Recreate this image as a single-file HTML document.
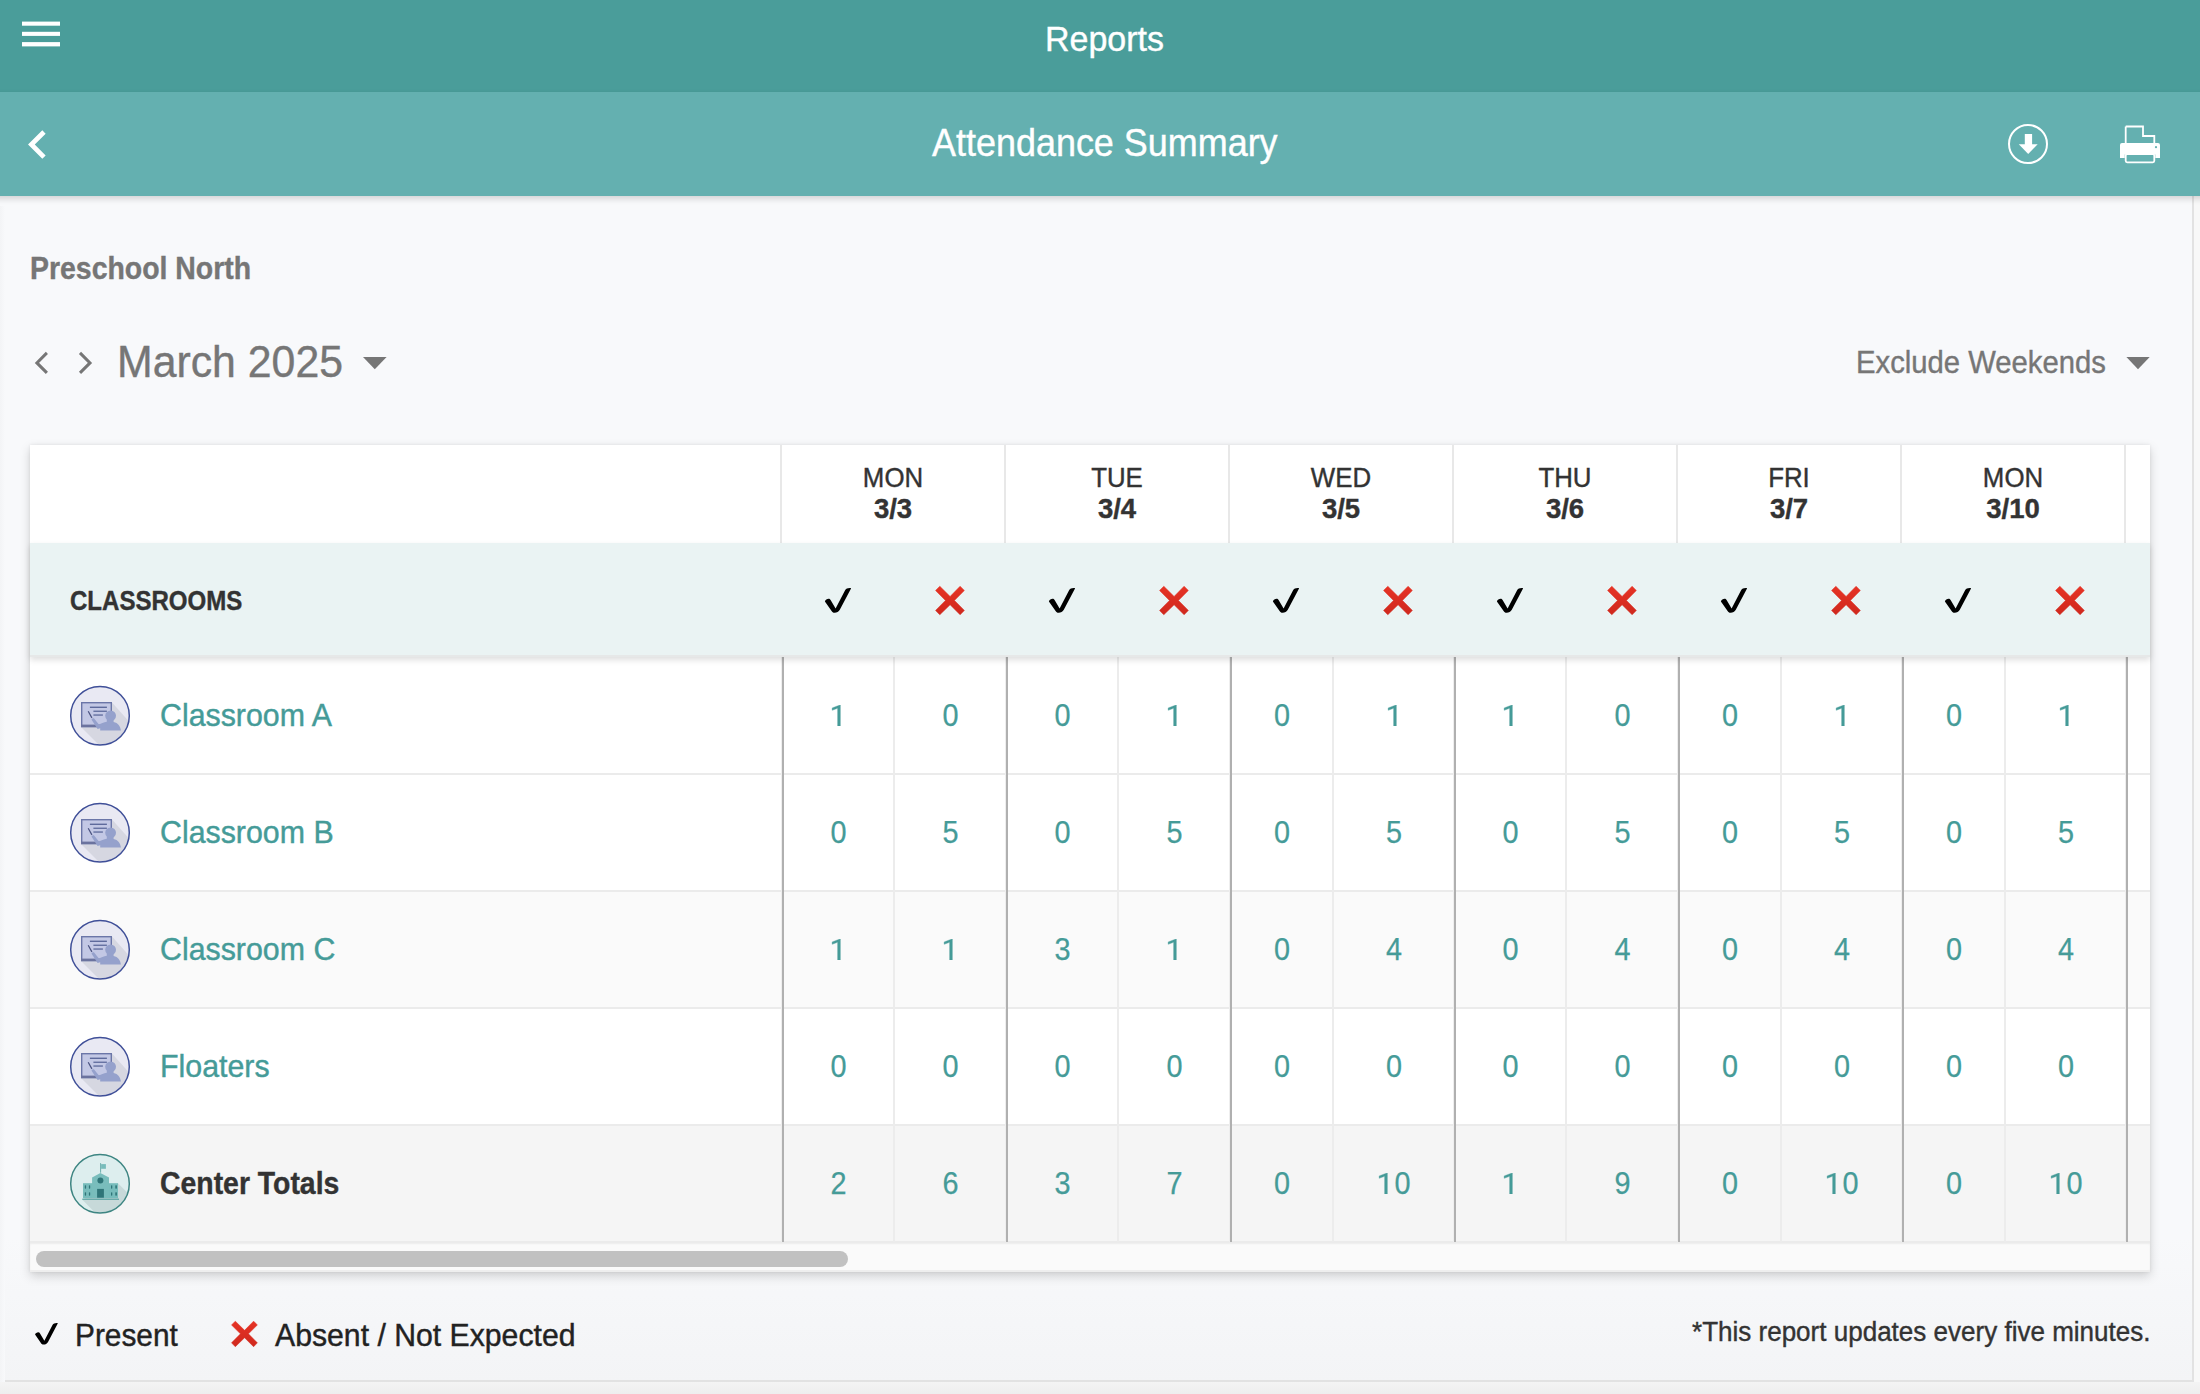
<!DOCTYPE html>
<html><head><meta charset="utf-8">
<style>
*{box-sizing:border-box;margin:0;padding:0}
html,body{width:2200px;height:1394px;overflow:hidden}
body{position:relative;background:#f0f0f0;font-family:"Liberation Sans",sans-serif}
.abs{position:absolute}
.t{position:absolute;white-space:nowrap;line-height:1;transform-origin:0 0;-webkit-text-stroke-width:.4px}
.n{position:absolute;white-space:nowrap;line-height:1;text-align:center;font-size:31px;color:#459b98;-webkit-text-stroke:.25px #459b98;transform:scaleX(.93)}
</style></head>
<body>
<svg width="0" height="0" style="position:absolute"><defs>
<linearGradient id="xg" x1="0" y1="0" x2="0" y2="1"><stop offset="0" stop-color="#e63325"/><stop offset="1" stop-color="#cf281d"/></linearGradient>
</defs></svg>

<div class="abs" style="left:0;top:196px;width:2194px;height:1186px;background:linear-gradient(#f8f9fb 0,#f8f9fb 1040px,#f3f4f6 1186px);border-right:2px solid #e2e2e2;border-bottom:2px solid #e2e2e2"></div>
<div class="abs" style="left:2194px;top:196px;width:6px;height:1186px;background:#f8f8f8"></div>
<div class="abs" style="left:0;top:1382px;width:2200px;height:12px;background:linear-gradient(#f4f4f4,#eeeeee)"></div>
<div class="abs" style="left:0;top:0;width:2200px;height:92px;background:#4a9d9a"></div>
<div class="abs" style="left:-20px;top:92px;width:2240px;height:104px;background:#64b0b0;box-shadow:0 3px 6px rgba(0,0,0,.15)"></div>
<div class="abs" style="left:0;top:206px;width:5px;height:1176px;background:linear-gradient(90deg,#f3f4f6,#f8f9fb)"></div>
<svg class="abs" style="left:0;top:0" width="80" height="80"><rect x="22" y="21.6" width="38" height="4.1" fill="#fff"/><rect x="22" y="31.8" width="38" height="4.1" fill="#fff"/><rect x="22" y="42.1" width="38" height="4.3" fill="#fff"/></svg>
<div class="t" style="left:1045.3px;top:21.6px;font-size:35.44px;color:#fff;transform:scaleX(.9585)">Reports</div>
<svg class="abs" style="left:8.9px;top:115.6px" width="57.1" height="57.1" viewBox="0 0 24 24"><path d="M15.41 7.41L14 6l-6 6 6 6 1.41-1.41L10.83 12z" fill="#fff"/></svg>
<div class="t" style="left:931.9px;top:123.5px;font-size:38.18px;color:#fff;transform:scaleX(.9415)">Attendance Summary</div>
<svg class="abs" style="left:2000px;top:116px" width="56" height="56" viewBox="0 0 56 56">
<circle cx="28" cy="28" r="19" fill="none" stroke="#fff" stroke-width="2"/>
<rect x="24.8" y="18" width="7.3" height="11.5" fill="#fff"/>
<path d="M18.8 28.2 L37.7 28.2 L28.2 37.9 Z" fill="#fff"/>
</svg>
<svg class="abs" style="left:2110px;top:115px" width="60" height="60" viewBox="0 0 60 60">
<path d="M15.7 11.5 L33 11.5 L33 21 L44.3 21 L44.3 29.5" fill="none" stroke="#fff" stroke-width="1.8"/>
<path d="M15.7 11.5 L15.7 29.5" stroke="#fff" stroke-width="1.8"/>
<path d="M12 28 L48 28 Q50 28 50 30 L50 43 L45.3 43 L45.3 39.5 L14.7 39.5 L14.7 43 L10 43 L10 30 Q10 28 12 28 Z" fill="#fff"/>
<circle cx="46" cy="32.2" r="1.1" fill="#64b0b0"/>
<rect x="15.7" y="39" width="28.6" height="8.3" rx="1.5" fill="none" stroke="#fff" stroke-width="1.8"/>
</svg>
<div class="t" style="left:29.6px;top:253.4px;font-size:31.56px;font-weight:bold;color:#767676;transform:scaleX(.9011)">Preschool North</div>
<svg class="abs" style="left:20px;top:340px" width="90" height="50" viewBox="0 0 90 50"><path d="M26.9 12.9 L16.9 22.9 L26.9 32.9" fill="none" stroke="#767676" stroke-width="3"/><path d="M60 12.9 L70 22.9 L60 32.9" fill="none" stroke="#767676" stroke-width="3"/></svg>
<div class="t" style="left:117.3px;top:340.3px;font-size:44.49px;color:#767676;transform:scaleX(.9622)">March 2025</div>
<svg class="abs" style="left:360px;top:350px" width="30" height="25"><path d="M3 7 L26.6 7 L14.8 19.2 Z" fill="#767676"/></svg>
<div class="t" style="left:1856px;top:346.8px;font-size:31.7px;color:#767676;transform:scaleX(.923)">Exclude Weekends</div>
<svg class="abs" style="left:2120px;top:350px" width="35" height="25"><path d="M6.4 7 L29.7 7 L18 19.2 Z" fill="#767676"/></svg>
<div class="abs" style="left:30px;top:445px;width:2120px;height:827px;background:#fff;box-shadow:0 4px 10px rgba(0,0,0,.17),0 0 3px rgba(0,0,0,.08)"></div>
<div class="abs" style="left:780px;top:445px;width:2px;height:98px;background:#e8e8e8"></div>
<div class="abs" style="left:1004px;top:445px;width:2px;height:98px;background:#e8e8e8"></div>
<div class="abs" style="left:1228px;top:445px;width:2px;height:98px;background:#e8e8e8"></div>
<div class="abs" style="left:1452px;top:445px;width:2px;height:98px;background:#e8e8e8"></div>
<div class="abs" style="left:1676px;top:445px;width:2px;height:98px;background:#e8e8e8"></div>
<div class="abs" style="left:1900px;top:445px;width:2px;height:98px;background:#e8e8e8"></div>
<div class="abs" style="left:2124px;top:445px;width:2px;height:98px;background:#e8e8e8"></div>
<div class="t" style="left:781px;width:224px;text-align:center;top:464px;font-size:27.2px;color:#333;transform:scaleX(.95);transform-origin:50% 0">MON</div>
<div class="t" style="left:781px;width:224px;text-align:center;top:494.8px;font-size:27.5px;font-weight:bold;color:#333">3/3</div>
<div class="t" style="left:1005px;width:224px;text-align:center;top:464px;font-size:27.2px;color:#333;transform:scaleX(.95);transform-origin:50% 0">TUE</div>
<div class="t" style="left:1005px;width:224px;text-align:center;top:494.8px;font-size:27.5px;font-weight:bold;color:#333">3/4</div>
<div class="t" style="left:1229px;width:224px;text-align:center;top:464px;font-size:27.2px;color:#333;transform:scaleX(.95);transform-origin:50% 0">WED</div>
<div class="t" style="left:1229px;width:224px;text-align:center;top:494.8px;font-size:27.5px;font-weight:bold;color:#333">3/5</div>
<div class="t" style="left:1453px;width:224px;text-align:center;top:464px;font-size:27.2px;color:#333;transform:scaleX(.95);transform-origin:50% 0">THU</div>
<div class="t" style="left:1453px;width:224px;text-align:center;top:494.8px;font-size:27.5px;font-weight:bold;color:#333">3/6</div>
<div class="t" style="left:1677px;width:224px;text-align:center;top:464px;font-size:27.2px;color:#333;transform:scaleX(.95);transform-origin:50% 0">FRI</div>
<div class="t" style="left:1677px;width:224px;text-align:center;top:494.8px;font-size:27.5px;font-weight:bold;color:#333">3/7</div>
<div class="t" style="left:1901px;width:224px;text-align:center;top:464px;font-size:27.2px;color:#333;transform:scaleX(.95);transform-origin:50% 0">MON</div>
<div class="t" style="left:1901px;width:224px;text-align:center;top:494.8px;font-size:27.5px;font-weight:bold;color:#333">3/10</div>
<div class="abs" style="left:30px;top:543px;width:2120px;height:114px;background:#eaf3f3;border-bottom:2px solid #e6e8e8;box-shadow:0 3px 6px rgba(0,0,0,.13);z-index:2"></div>
<div class="t" style="left:69.8px;top:587.6px;font-size:27.04px;font-weight:bold;color:#333;transform:scaleX(.8893);z-index:3">CLASSROOMS</div>
<svg class="abs" style="left:820px;top:580px;z-index:3" width="40" height="40" viewBox="0 0 40 40"><path d="M4.9 21.4 C5.4 19.9 7 18.9 8.6 18.8 C9.5 18.8 10.1 19.3 10.6 20.1 L15.6 28.4 L25.1 10.2 C26 8.6 28.2 7.7 31 8.1 C31 8.6 30.8 9 30.5 9.5 L19.8 29.8 C18.7 31.8 16.6 32.9 14.4 32.8 C13.1 32.7 12.3 32.1 11.6 31 Z" fill="#000"/></svg>
<svg class="abs" style="left:930px;top:580px;z-index:3" width="40" height="40" viewBox="0 0 40 40"><path d="M5.6 10.5 L9.8 6.3 L20.1 16.5 L30.1 6.3 L34.3 10.5 L24.4 20.4 L34.3 30.4 L30.1 34.7 L20.1 24.7 L9.8 34.7 L5.6 30.4 L15.5 20.4 Z" fill="url(#xg)" stroke="url(#xg)" stroke-width="0.6" stroke-linejoin="round"/></svg>
<svg class="abs" style="left:1044px;top:580px;z-index:3" width="40" height="40" viewBox="0 0 40 40"><path d="M4.9 21.4 C5.4 19.9 7 18.9 8.6 18.8 C9.5 18.8 10.1 19.3 10.6 20.1 L15.6 28.4 L25.1 10.2 C26 8.6 28.2 7.7 31 8.1 C31 8.6 30.8 9 30.5 9.5 L19.8 29.8 C18.7 31.8 16.6 32.9 14.4 32.8 C13.1 32.7 12.3 32.1 11.6 31 Z" fill="#000"/></svg>
<svg class="abs" style="left:1154px;top:580px;z-index:3" width="40" height="40" viewBox="0 0 40 40"><path d="M5.6 10.5 L9.8 6.3 L20.1 16.5 L30.1 6.3 L34.3 10.5 L24.4 20.4 L34.3 30.4 L30.1 34.7 L20.1 24.7 L9.8 34.7 L5.6 30.4 L15.5 20.4 Z" fill="url(#xg)" stroke="url(#xg)" stroke-width="0.6" stroke-linejoin="round"/></svg>
<svg class="abs" style="left:1268px;top:580px;z-index:3" width="40" height="40" viewBox="0 0 40 40"><path d="M4.9 21.4 C5.4 19.9 7 18.9 8.6 18.8 C9.5 18.8 10.1 19.3 10.6 20.1 L15.6 28.4 L25.1 10.2 C26 8.6 28.2 7.7 31 8.1 C31 8.6 30.8 9 30.5 9.5 L19.8 29.8 C18.7 31.8 16.6 32.9 14.4 32.8 C13.1 32.7 12.3 32.1 11.6 31 Z" fill="#000"/></svg>
<svg class="abs" style="left:1378px;top:580px;z-index:3" width="40" height="40" viewBox="0 0 40 40"><path d="M5.6 10.5 L9.8 6.3 L20.1 16.5 L30.1 6.3 L34.3 10.5 L24.4 20.4 L34.3 30.4 L30.1 34.7 L20.1 24.7 L9.8 34.7 L5.6 30.4 L15.5 20.4 Z" fill="url(#xg)" stroke="url(#xg)" stroke-width="0.6" stroke-linejoin="round"/></svg>
<svg class="abs" style="left:1492px;top:580px;z-index:3" width="40" height="40" viewBox="0 0 40 40"><path d="M4.9 21.4 C5.4 19.9 7 18.9 8.6 18.8 C9.5 18.8 10.1 19.3 10.6 20.1 L15.6 28.4 L25.1 10.2 C26 8.6 28.2 7.7 31 8.1 C31 8.6 30.8 9 30.5 9.5 L19.8 29.8 C18.7 31.8 16.6 32.9 14.4 32.8 C13.1 32.7 12.3 32.1 11.6 31 Z" fill="#000"/></svg>
<svg class="abs" style="left:1602px;top:580px;z-index:3" width="40" height="40" viewBox="0 0 40 40"><path d="M5.6 10.5 L9.8 6.3 L20.1 16.5 L30.1 6.3 L34.3 10.5 L24.4 20.4 L34.3 30.4 L30.1 34.7 L20.1 24.7 L9.8 34.7 L5.6 30.4 L15.5 20.4 Z" fill="url(#xg)" stroke="url(#xg)" stroke-width="0.6" stroke-linejoin="round"/></svg>
<svg class="abs" style="left:1716px;top:580px;z-index:3" width="40" height="40" viewBox="0 0 40 40"><path d="M4.9 21.4 C5.4 19.9 7 18.9 8.6 18.8 C9.5 18.8 10.1 19.3 10.6 20.1 L15.6 28.4 L25.1 10.2 C26 8.6 28.2 7.7 31 8.1 C31 8.6 30.8 9 30.5 9.5 L19.8 29.8 C18.7 31.8 16.6 32.9 14.4 32.8 C13.1 32.7 12.3 32.1 11.6 31 Z" fill="#000"/></svg>
<svg class="abs" style="left:1826px;top:580px;z-index:3" width="40" height="40" viewBox="0 0 40 40"><path d="M5.6 10.5 L9.8 6.3 L20.1 16.5 L30.1 6.3 L34.3 10.5 L24.4 20.4 L34.3 30.4 L30.1 34.7 L20.1 24.7 L9.8 34.7 L5.6 30.4 L15.5 20.4 Z" fill="url(#xg)" stroke="url(#xg)" stroke-width="0.6" stroke-linejoin="round"/></svg>
<svg class="abs" style="left:1940px;top:580px;z-index:3" width="40" height="40" viewBox="0 0 40 40"><path d="M4.9 21.4 C5.4 19.9 7 18.9 8.6 18.8 C9.5 18.8 10.1 19.3 10.6 20.1 L15.6 28.4 L25.1 10.2 C26 8.6 28.2 7.7 31 8.1 C31 8.6 30.8 9 30.5 9.5 L19.8 29.8 C18.7 31.8 16.6 32.9 14.4 32.8 C13.1 32.7 12.3 32.1 11.6 31 Z" fill="#000"/></svg>
<svg class="abs" style="left:2050px;top:580px;z-index:3" width="40" height="40" viewBox="0 0 40 40"><path d="M5.6 10.5 L9.8 6.3 L20.1 16.5 L30.1 6.3 L34.3 10.5 L24.4 20.4 L34.3 30.4 L30.1 34.7 L20.1 24.7 L9.8 34.7 L5.6 30.4 L15.5 20.4 Z" fill="url(#xg)" stroke="url(#xg)" stroke-width="0.6" stroke-linejoin="round"/></svg>
<div class="abs" style="left:30px;top:658px;width:2120px;height:117px;background:#ffffff;border-bottom:2px solid #ebebeb"></div>
<svg class="abs" style="left:65.0px;top:681.0px" width="70" height="70" viewBox="0 0 70 70">
<defs><clipPath id="cc715"><circle cx="35" cy="34.7" r="29"/></clipPath></defs>
<circle cx="35" cy="34.7" r="29.1" fill="#e9e9f3"/>
<g clip-path="url(#cc715)"><path d="M47 21.5 L92 71.5 L66 96 L16 46 Z" fill="#d6d7e1"/></g>
<rect x="16.7" y="21.7" width="29.6" height="23.8" fill="#c3c8e5" stroke="#6b76a8" stroke-width="1.4"/>
<rect x="16" y="43.6" width="31" height="2.6" fill="#6b739f"/>
<rect x="24.9" y="25.6" width="17" height="1.4" fill="#5e6a9c"/>
<rect x="28.4" y="29.6" width="13.5" height="1.3" fill="#5e6a9c"/>
<rect x="28.4" y="33.4" width="9.5" height="1.3" fill="#5e6a9c"/>
<path d="M23.2 30.2 L26.9 36.9" stroke="#4a5280" stroke-width="1.2"/>
<circle cx="45.6" cy="34.8" r="5.4" fill="#95a1cc"/>
<path d="M26.6 38.7 C26.8 37.6 28.2 36.9 29.1 37.6 L33.9 43.6 C36 42.2 38.8 41.3 41.8 40.7 L41.8 38.5 L48.6 38.5 L48.6 40.9 C53 41.6 55.5 45.2 55.9 49.4 L35.2 49.4 L35.2 47.3 L32.6 47.9 Z" fill="#95a1cc"/>
<circle cx="35" cy="34.7" r="29.3" fill="none" stroke="#3f4f98" stroke-width="1.5"/>
</svg>
<div class="t" style="left:159.9px;top:701.3px;font-size:30.88px;color:#459b98;transform:scaleX(.9826)">Classroom A</div>
<svg class="abs" style="left:830.10px;top:704.5px" width="16.8" height="21.4" viewBox="0 0 16.8 21.4"><path d="M10.35 0 L10.35 21.38 L7.63 21.38 L7.63 3.36 L2.18 5.36 L2.18 2.91 L9.93 0 Z" fill="#459b98" stroke="#459b98" stroke-width=".35"/></svg>
<div class="n" style="left:894px;width:113px;top:699.7px">0</div>
<div class="n" style="left:1007px;width:111px;top:699.7px">0</div>
<svg class="abs" style="left:1166.10px;top:704.5px" width="16.8" height="21.4" viewBox="0 0 16.8 21.4"><path d="M10.35 0 L10.35 21.38 L7.63 21.38 L7.63 3.36 L2.18 5.36 L2.18 2.91 L9.93 0 Z" fill="#459b98" stroke="#459b98" stroke-width=".35"/></svg>
<div class="n" style="left:1231px;width:102px;top:699.7px">0</div>
<svg class="abs" style="left:1385.60px;top:704.5px" width="16.8" height="21.4" viewBox="0 0 16.8 21.4"><path d="M10.35 0 L10.35 21.38 L7.63 21.38 L7.63 3.36 L2.18 5.36 L2.18 2.91 L9.93 0 Z" fill="#459b98" stroke="#459b98" stroke-width=".35"/></svg>
<svg class="abs" style="left:1502.10px;top:704.5px" width="16.8" height="21.4" viewBox="0 0 16.8 21.4"><path d="M10.35 0 L10.35 21.38 L7.63 21.38 L7.63 3.36 L2.18 5.36 L2.18 2.91 L9.93 0 Z" fill="#459b98" stroke="#459b98" stroke-width=".35"/></svg>
<div class="n" style="left:1566px;width:113px;top:699.7px">0</div>
<div class="n" style="left:1679px;width:102px;top:699.7px">0</div>
<svg class="abs" style="left:1833.60px;top:704.5px" width="16.8" height="21.4" viewBox="0 0 16.8 21.4"><path d="M10.35 0 L10.35 21.38 L7.63 21.38 L7.63 3.36 L2.18 5.36 L2.18 2.91 L9.93 0 Z" fill="#459b98" stroke="#459b98" stroke-width=".35"/></svg>
<div class="n" style="left:1903px;width:102px;top:699.7px">0</div>
<svg class="abs" style="left:2057.60px;top:704.5px" width="16.8" height="21.4" viewBox="0 0 16.8 21.4"><path d="M10.35 0 L10.35 21.38 L7.63 21.38 L7.63 3.36 L2.18 5.36 L2.18 2.91 L9.93 0 Z" fill="#459b98" stroke="#459b98" stroke-width=".35"/></svg>
<div class="abs" style="left:30px;top:775px;width:2120px;height:117px;background:#ffffff;border-bottom:2px solid #ebebeb"></div>
<svg class="abs" style="left:65.0px;top:798.0px" width="70" height="70" viewBox="0 0 70 70">
<defs><clipPath id="cc832"><circle cx="35" cy="34.7" r="29"/></clipPath></defs>
<circle cx="35" cy="34.7" r="29.1" fill="#e9e9f3"/>
<g clip-path="url(#cc832)"><path d="M47 21.5 L92 71.5 L66 96 L16 46 Z" fill="#d6d7e1"/></g>
<rect x="16.7" y="21.7" width="29.6" height="23.8" fill="#c3c8e5" stroke="#6b76a8" stroke-width="1.4"/>
<rect x="16" y="43.6" width="31" height="2.6" fill="#6b739f"/>
<rect x="24.9" y="25.6" width="17" height="1.4" fill="#5e6a9c"/>
<rect x="28.4" y="29.6" width="13.5" height="1.3" fill="#5e6a9c"/>
<rect x="28.4" y="33.4" width="9.5" height="1.3" fill="#5e6a9c"/>
<path d="M23.2 30.2 L26.9 36.9" stroke="#4a5280" stroke-width="1.2"/>
<circle cx="45.6" cy="34.8" r="5.4" fill="#95a1cc"/>
<path d="M26.6 38.7 C26.8 37.6 28.2 36.9 29.1 37.6 L33.9 43.6 C36 42.2 38.8 41.3 41.8 40.7 L41.8 38.5 L48.6 38.5 L48.6 40.9 C53 41.6 55.5 45.2 55.9 49.4 L35.2 49.4 L35.2 47.3 L32.6 47.9 Z" fill="#95a1cc"/>
<circle cx="35" cy="34.7" r="29.3" fill="none" stroke="#3f4f98" stroke-width="1.5"/>
</svg>
<div class="t" style="left:159.9px;top:818.3px;font-size:30.88px;color:#459b98;transform:scaleX(.9826)">Classroom B</div>
<div class="n" style="left:783px;width:111px;top:816.7px">0</div>
<div class="n" style="left:894px;width:113px;top:816.7px">5</div>
<div class="n" style="left:1007px;width:111px;top:816.7px">0</div>
<div class="n" style="left:1118px;width:113px;top:816.7px">5</div>
<div class="n" style="left:1231px;width:102px;top:816.7px">0</div>
<div class="n" style="left:1333px;width:122px;top:816.7px">5</div>
<div class="n" style="left:1455px;width:111px;top:816.7px">0</div>
<div class="n" style="left:1566px;width:113px;top:816.7px">5</div>
<div class="n" style="left:1679px;width:102px;top:816.7px">0</div>
<div class="n" style="left:1781px;width:122px;top:816.7px">5</div>
<div class="n" style="left:1903px;width:102px;top:816.7px">0</div>
<div class="n" style="left:2005px;width:122px;top:816.7px">5</div>
<div class="abs" style="left:30px;top:892px;width:2120px;height:117px;background:#fafafa;border-bottom:2px solid #ebebeb"></div>
<svg class="abs" style="left:65.0px;top:915.0px" width="70" height="70" viewBox="0 0 70 70">
<defs><clipPath id="cc949"><circle cx="35" cy="34.7" r="29"/></clipPath></defs>
<circle cx="35" cy="34.7" r="29.1" fill="#e9e9f3"/>
<g clip-path="url(#cc949)"><path d="M47 21.5 L92 71.5 L66 96 L16 46 Z" fill="#d6d7e1"/></g>
<rect x="16.7" y="21.7" width="29.6" height="23.8" fill="#c3c8e5" stroke="#6b76a8" stroke-width="1.4"/>
<rect x="16" y="43.6" width="31" height="2.6" fill="#6b739f"/>
<rect x="24.9" y="25.6" width="17" height="1.4" fill="#5e6a9c"/>
<rect x="28.4" y="29.6" width="13.5" height="1.3" fill="#5e6a9c"/>
<rect x="28.4" y="33.4" width="9.5" height="1.3" fill="#5e6a9c"/>
<path d="M23.2 30.2 L26.9 36.9" stroke="#4a5280" stroke-width="1.2"/>
<circle cx="45.6" cy="34.8" r="5.4" fill="#95a1cc"/>
<path d="M26.6 38.7 C26.8 37.6 28.2 36.9 29.1 37.6 L33.9 43.6 C36 42.2 38.8 41.3 41.8 40.7 L41.8 38.5 L48.6 38.5 L48.6 40.9 C53 41.6 55.5 45.2 55.9 49.4 L35.2 49.4 L35.2 47.3 L32.6 47.9 Z" fill="#95a1cc"/>
<circle cx="35" cy="34.7" r="29.3" fill="none" stroke="#3f4f98" stroke-width="1.5"/>
</svg>
<div class="t" style="left:159.9px;top:935.3px;font-size:30.88px;color:#459b98;transform:scaleX(.9826)">Classroom C</div>
<svg class="abs" style="left:830.10px;top:938.5px" width="16.8" height="21.4" viewBox="0 0 16.8 21.4"><path d="M10.35 0 L10.35 21.38 L7.63 21.38 L7.63 3.36 L2.18 5.36 L2.18 2.91 L9.93 0 Z" fill="#459b98" stroke="#459b98" stroke-width=".35"/></svg>
<svg class="abs" style="left:942.10px;top:938.5px" width="16.8" height="21.4" viewBox="0 0 16.8 21.4"><path d="M10.35 0 L10.35 21.38 L7.63 21.38 L7.63 3.36 L2.18 5.36 L2.18 2.91 L9.93 0 Z" fill="#459b98" stroke="#459b98" stroke-width=".35"/></svg>
<div class="n" style="left:1007px;width:111px;top:933.7px">3</div>
<svg class="abs" style="left:1166.10px;top:938.5px" width="16.8" height="21.4" viewBox="0 0 16.8 21.4"><path d="M10.35 0 L10.35 21.38 L7.63 21.38 L7.63 3.36 L2.18 5.36 L2.18 2.91 L9.93 0 Z" fill="#459b98" stroke="#459b98" stroke-width=".35"/></svg>
<div class="n" style="left:1231px;width:102px;top:933.7px">0</div>
<div class="n" style="left:1333px;width:122px;top:933.7px">4</div>
<div class="n" style="left:1455px;width:111px;top:933.7px">0</div>
<div class="n" style="left:1566px;width:113px;top:933.7px">4</div>
<div class="n" style="left:1679px;width:102px;top:933.7px">0</div>
<div class="n" style="left:1781px;width:122px;top:933.7px">4</div>
<div class="n" style="left:1903px;width:102px;top:933.7px">0</div>
<div class="n" style="left:2005px;width:122px;top:933.7px">4</div>
<div class="abs" style="left:30px;top:1009px;width:2120px;height:117px;background:#ffffff;border-bottom:2px solid #ebebeb"></div>
<svg class="abs" style="left:65.0px;top:1032.0px" width="70" height="70" viewBox="0 0 70 70">
<defs><clipPath id="cc1066"><circle cx="35" cy="34.7" r="29"/></clipPath></defs>
<circle cx="35" cy="34.7" r="29.1" fill="#e9e9f3"/>
<g clip-path="url(#cc1066)"><path d="M47 21.5 L92 71.5 L66 96 L16 46 Z" fill="#d6d7e1"/></g>
<rect x="16.7" y="21.7" width="29.6" height="23.8" fill="#c3c8e5" stroke="#6b76a8" stroke-width="1.4"/>
<rect x="16" y="43.6" width="31" height="2.6" fill="#6b739f"/>
<rect x="24.9" y="25.6" width="17" height="1.4" fill="#5e6a9c"/>
<rect x="28.4" y="29.6" width="13.5" height="1.3" fill="#5e6a9c"/>
<rect x="28.4" y="33.4" width="9.5" height="1.3" fill="#5e6a9c"/>
<path d="M23.2 30.2 L26.9 36.9" stroke="#4a5280" stroke-width="1.2"/>
<circle cx="45.6" cy="34.8" r="5.4" fill="#95a1cc"/>
<path d="M26.6 38.7 C26.8 37.6 28.2 36.9 29.1 37.6 L33.9 43.6 C36 42.2 38.8 41.3 41.8 40.7 L41.8 38.5 L48.6 38.5 L48.6 40.9 C53 41.6 55.5 45.2 55.9 49.4 L35.2 49.4 L35.2 47.3 L32.6 47.9 Z" fill="#95a1cc"/>
<circle cx="35" cy="34.7" r="29.3" fill="none" stroke="#3f4f98" stroke-width="1.5"/>
</svg>
<div class="t" style="left:159.9px;top:1052.3px;font-size:30.88px;color:#459b98;transform:scaleX(.9826)">Floaters</div>
<div class="n" style="left:783px;width:111px;top:1050.7px">0</div>
<div class="n" style="left:894px;width:113px;top:1050.7px">0</div>
<div class="n" style="left:1007px;width:111px;top:1050.7px">0</div>
<div class="n" style="left:1118px;width:113px;top:1050.7px">0</div>
<div class="n" style="left:1231px;width:102px;top:1050.7px">0</div>
<div class="n" style="left:1333px;width:122px;top:1050.7px">0</div>
<div class="n" style="left:1455px;width:111px;top:1050.7px">0</div>
<div class="n" style="left:1566px;width:113px;top:1050.7px">0</div>
<div class="n" style="left:1679px;width:102px;top:1050.7px">0</div>
<div class="n" style="left:1781px;width:122px;top:1050.7px">0</div>
<div class="n" style="left:1903px;width:102px;top:1050.7px">0</div>
<div class="n" style="left:2005px;width:122px;top:1050.7px">0</div>
<div class="abs" style="left:30px;top:1126px;width:2120px;height:117px;background:#f5f5f5;border-bottom:2px solid #ebebeb"></div>
<svg class="abs" style="left:65.0px;top:1149.0px" width="70" height="70" viewBox="0 0 70 70">
<defs><clipPath id="sc"><circle cx="35" cy="34.7" r="29"/></clipPath></defs>
<circle cx="35" cy="34.7" r="29.1" fill="#ddeeee"/>
<g clip-path="url(#sc)"><path d="M53 34.2 L103 84.2 L67.3 100.8 L17.3 50.8 Z" fill="#c7d9d9"/></g>
<rect x="35.2" y="14.1" width="0.9" height="9.6" fill="#5fa6a5"/>
<rect x="36.1" y="15.1" width="4.8" height="4.7" fill="#77bcbb"/>
<rect x="18" y="34.2" width="35" height="15" fill="#77bcbb"/>
<path d="M27.1 49 L27.1 28.6 L35.4 23.9 L44 28.6 L44 49 Z" fill="#79bdbc"/>
<circle cx="35.4" cy="31.6" r="3" fill="#2f7578"/>
<rect x="32.1" y="39.9" width="6.8" height="8.8" fill="#2f7578"/>
<g fill="#2f7578"><rect x="19.8" y="36.2" width="1.3" height="3.5" rx=".6"/><rect x="23.9" y="36.2" width="1.3" height="3.5" rx=".6"/><rect x="46" y="36.2" width="1.3" height="3.5" rx=".6"/><rect x="50.3" y="36.2" width="1.6" height="3.5" rx=".6"/>
<rect x="19.8" y="43.2" width="1.3" height="3.5" rx=".6"/><rect x="23.9" y="43.2" width="1.3" height="3.5" rx=".6"/><rect x="46" y="43.2" width="1.3" height="3.5" rx=".6"/><rect x="50.3" y="43.2" width="1.6" height="3.5" rx=".6"/></g>
<rect x="17.3" y="49.6" width="36.7" height="1.3" fill="#5fa6a5"/>
<circle cx="35" cy="34.7" r="29.3" fill="none" stroke="#3d8582" stroke-width="1.5"/>
</svg>
<div class="t" style="left:159.8px;top:1168.3px;font-size:31.29px;font-weight:bold;color:#333;transform:scaleX(.9077)">Center Totals</div>
<div class="n" style="left:783px;width:111px;top:1167.7px">2</div>
<div class="n" style="left:894px;width:113px;top:1167.7px">6</div>
<div class="n" style="left:1007px;width:111px;top:1167.7px">3</div>
<div class="n" style="left:1118px;width:113px;top:1167.7px">7</div>
<div class="n" style="left:1231px;width:102px;top:1167.7px">0</div>
<svg class="abs" style="left:1377.20px;top:1172.5px" width="16.8" height="21.4" viewBox="0 0 16.8 21.4"><path d="M10.35 0 L10.35 21.38 L7.63 21.38 L7.63 3.36 L2.18 5.36 L2.18 2.91 L9.93 0 Z" fill="#459b98" stroke="#459b98" stroke-width=".35"/></svg>
<div class="n" style="left:1394.00px;width:16.8px;top:1167.7px">0</div>
<svg class="abs" style="left:1502.10px;top:1172.5px" width="16.8" height="21.4" viewBox="0 0 16.8 21.4"><path d="M10.35 0 L10.35 21.38 L7.63 21.38 L7.63 3.36 L2.18 5.36 L2.18 2.91 L9.93 0 Z" fill="#459b98" stroke="#459b98" stroke-width=".35"/></svg>
<div class="n" style="left:1566px;width:113px;top:1167.7px">9</div>
<div class="n" style="left:1679px;width:102px;top:1167.7px">0</div>
<svg class="abs" style="left:1825.20px;top:1172.5px" width="16.8" height="21.4" viewBox="0 0 16.8 21.4"><path d="M10.35 0 L10.35 21.38 L7.63 21.38 L7.63 3.36 L2.18 5.36 L2.18 2.91 L9.93 0 Z" fill="#459b98" stroke="#459b98" stroke-width=".35"/></svg>
<div class="n" style="left:1842.00px;width:16.8px;top:1167.7px">0</div>
<div class="n" style="left:1903px;width:102px;top:1167.7px">0</div>
<svg class="abs" style="left:2049.20px;top:1172.5px" width="16.8" height="21.4" viewBox="0 0 16.8 21.4"><path d="M10.35 0 L10.35 21.38 L7.63 21.38 L7.63 3.36 L2.18 5.36 L2.18 2.91 L9.93 0 Z" fill="#459b98" stroke="#459b98" stroke-width=".35"/></svg>
<div class="n" style="left:2066.00px;width:16.8px;top:1167.7px">0</div>
<div class="abs" style="left:781px;top:657px;width:1px;height:585px;background:#eeeeee"></div>
<div class="abs" style="left:782px;top:657px;width:2px;height:585px;background:#b0b0b0"></div>
<div class="abs" style="left:1005px;top:657px;width:1px;height:585px;background:#eeeeee"></div>
<div class="abs" style="left:1006px;top:657px;width:2px;height:585px;background:#b0b0b0"></div>
<div class="abs" style="left:1229px;top:657px;width:1px;height:585px;background:#eeeeee"></div>
<div class="abs" style="left:1230px;top:657px;width:2px;height:585px;background:#b0b0b0"></div>
<div class="abs" style="left:1453px;top:657px;width:1px;height:585px;background:#eeeeee"></div>
<div class="abs" style="left:1454px;top:657px;width:2px;height:585px;background:#b0b0b0"></div>
<div class="abs" style="left:1677px;top:657px;width:1px;height:585px;background:#eeeeee"></div>
<div class="abs" style="left:1678px;top:657px;width:2px;height:585px;background:#b0b0b0"></div>
<div class="abs" style="left:1901px;top:657px;width:1px;height:585px;background:#eeeeee"></div>
<div class="abs" style="left:1902px;top:657px;width:2px;height:585px;background:#b0b0b0"></div>
<div class="abs" style="left:2125px;top:657px;width:1px;height:585px;background:#eeeeee"></div>
<div class="abs" style="left:2126px;top:657px;width:2px;height:585px;background:#b0b0b0"></div>
<div class="abs" style="left:893px;top:657px;width:2px;height:585px;background:#ececec"></div>
<div class="abs" style="left:1117px;top:657px;width:2px;height:585px;background:#ececec"></div>
<div class="abs" style="left:1332px;top:657px;width:2px;height:585px;background:#ececec"></div>
<div class="abs" style="left:1565px;top:657px;width:2px;height:585px;background:#ececec"></div>
<div class="abs" style="left:1780px;top:657px;width:2px;height:585px;background:#ececec"></div>
<div class="abs" style="left:2004px;top:657px;width:2px;height:585px;background:#ececec"></div>
<div class="abs" style="left:30px;top:1243px;width:2120px;height:29px;background:#fafafa;box-shadow:inset 0 1px 2px rgba(0,0,0,.06);border-bottom:2px solid #eeeeee"></div>
<div class="abs" style="left:36px;top:1250.5px;width:812px;height:16.5px;border-radius:8.25px;background:#c1c1c1"></div>
<svg class="abs" style="left:28px;top:1315px" width="40" height="40" viewBox="0 0 40 40"><g transform="translate(2.8 1) scale(0.87)"><path d="M4.9 21.4 C5.4 19.9 7 18.9 8.6 18.8 C9.5 18.8 10.1 19.3 10.6 20.1 L15.6 28.4 L25.1 10.2 C26 8.6 28.2 7.7 31 8.1 C31 8.6 30.8 9 30.5 9.5 L19.8 29.8 C18.7 31.8 16.6 32.9 14.4 32.8 C13.1 32.7 12.3 32.1 11.6 31 Z" fill="#000"/></g></svg>
<svg class="abs" style="left:225px;top:1315px" width="40" height="40" viewBox="0 0 40 40"><g transform="translate(1.5 0.5) scale(0.9)"><path d="M5.6 10.5 L9.8 6.3 L20.1 16.5 L30.1 6.3 L34.3 10.5 L24.4 20.4 L34.3 30.4 L30.1 34.7 L20.1 24.7 L9.8 34.7 L5.6 30.4 L15.5 20.4 Z" fill="url(#xg)" stroke="url(#xg)" stroke-width="0.6" stroke-linejoin="round"/></g></svg>
<div class="t" style="left:75.1px;top:1319.6px;font-size:31.21px;color:#222;transform:scaleX(.9559)">Present</div>
<div class="t" style="left:274.8px;top:1319.5px;font-size:30.48px;color:#222;transform:scaleX(.9912)">Absent / Not Expected</div>
<div class="t" style="left:1691.6px;top:1318.8px;font-size:26.95px;color:#333;transform:scaleX(.966)">*This report updates every five minutes.</div>
</body></html>
